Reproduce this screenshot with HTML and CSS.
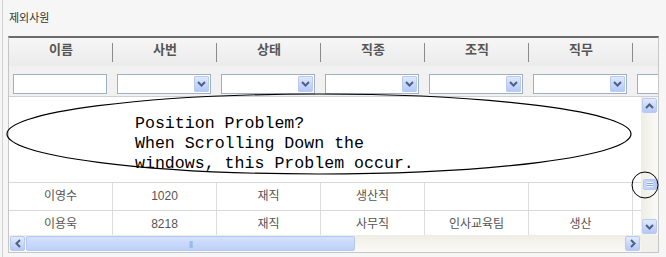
FILE: index.html
```html
<!DOCTYPE html>
<html lang="ko">
<head>
    <meta charset="UTF-8">
    <meta name="viewport" content="width=device-width, initial-scale=1.0">
    <title>제외사원</title>
    <link rel="stylesheet" href="styles.css">
</head>
<body>
    <div class="panel">
        <div class="title">제외사원</div>

        <div class="grid">
            <div class="grid-head">
                <div class="head-row">
                    <div class="head-cell">이름</div>
                    <div class="head-cell">사번</div>
                    <div class="head-cell">상태</div>
                    <div class="head-cell">직종</div>
                    <div class="head-cell">조직</div>
                    <div class="head-cell">직무</div>
                    <div class="head-cell"></div>
                </div>
                <div class="filter-row">
                    <div class="filter-cell"><input class="filter-input" type="text"></div>
                    <div class="filter-cell"><div class="filter-select"><span class="drop-btn"><svg width="9" height="6" viewBox="0 0 9 6"><polyline points="1,1 4.5,4.5 8,1" fill="none" stroke="#4d6185" stroke-width="2"/></svg></span></div></div>
                    <div class="filter-cell"><div class="filter-select"><span class="drop-btn"><svg width="9" height="6" viewBox="0 0 9 6"><polyline points="1,1 4.5,4.5 8,1" fill="none" stroke="#4d6185" stroke-width="2"/></svg></span></div></div>
                    <div class="filter-cell"><div class="filter-select"><span class="drop-btn"><svg width="9" height="6" viewBox="0 0 9 6"><polyline points="1,1 4.5,4.5 8,1" fill="none" stroke="#4d6185" stroke-width="2"/></svg></span></div></div>
                    <div class="filter-cell"><div class="filter-select"><span class="drop-btn"><svg width="9" height="6" viewBox="0 0 9 6"><polyline points="1,1 4.5,4.5 8,1" fill="none" stroke="#4d6185" stroke-width="2"/></svg></span></div></div>
                    <div class="filter-cell"><div class="filter-select"><span class="drop-btn"><svg width="9" height="6" viewBox="0 0 9 6"><polyline points="1,1 4.5,4.5 8,1" fill="none" stroke="#4d6185" stroke-width="2"/></svg></span></div></div>
                    <div class="filter-cell"><div class="filter-select"></div></div>
                </div>
            </div>

            <div class="grid-body">
                <div class="rows-view">
                    <div class="data-row">
                        <div class="cell">이영수</div>
                        <div class="cell">1020</div>
                        <div class="cell">재직</div>
                        <div class="cell">생산직</div>
                        <div class="cell"></div>
                        <div class="cell"></div>
                        <div class="cell"></div>
                    </div>
                    <div class="data-row">
                        <div class="cell">이용욱</div>
                        <div class="cell">8218</div>
                        <div class="cell">재직</div>
                        <div class="cell">사무직</div>
                        <div class="cell">인사교육팀</div>
                        <div class="cell">생산</div>
                        <div class="cell"></div>
                    </div>
                </div>
                <div class="vscroll">
                    <span class="sb-btn"><svg width="9" height="6" viewBox="0 0 9 6"><polyline points="1,5 4.5,1.5 8,5" fill="none" stroke="#4d6185" stroke-width="2"/></svg></span>
                    <span class="v-thumb"></span>
                    <span class="sb-btn sb-down"><svg width="9" height="6" viewBox="0 0 9 6"><polyline points="1,1 4.5,4.5 8,1" fill="none" stroke="#4d6185" stroke-width="2"/></svg></span>
                </div>
            </div>

            <div class="grid-foot">
                <div class="hscroll">
                    <span class="sb-btn"><svg width="6" height="9" viewBox="0 0 6 9"><polyline points="5,1 1.5,4.5 5,8" fill="none" stroke="#4d6185" stroke-width="2"/></svg></span>
                    <span class="h-thumb"><span class="grip">|||</span></span>
                    <span class="sb-btn sb-right"><svg width="6" height="9" viewBox="0 0 6 9"><polyline points="1,1 4.5,4.5 1,8" fill="none" stroke="#4d6185" stroke-width="2"/></svg></span>
                </div>
                <div class="corner"></div>
            </div>
        </div>
    </div>

    <!-- annotation drawn over the screenshot -->
    <svg class="note" width="666" height="257" viewBox="0 0 666 257">
        <ellipse cx="319" cy="134" rx="312" ry="40" fill="none" stroke="#000" stroke-width="1.2"/>
        <ellipse cx="645" cy="185" rx="13" ry="13" fill="none" stroke="#000" stroke-width="1"/>
        <text x="135" y="128">Position Problem?</text>
        <text x="135" y="148">When Scrolling Down the</text>
        <text x="135" y="168">windows, this Problem occur.</text>
    </svg>
</body>
</html>
```

FILE: styles.css
```css
body {
    margin: 0;
    background-color: #f6f6f6;
    font-family: "Liberation Sans", "Noto Sans CJK KR", sans-serif;
    width: 666px;
    height: 257px;
    overflow: hidden;
    position: relative;
}

.panel {
    margin-left: 2px;
    padding-left: 5px;
    height: 257px;
    border-left: 1px solid #d2d2d2;
}

.title {
    height: 36px;
    padding-top: 10px;
    padding-left: 1px;
    box-sizing: border-box;
    font-family: "Noto Sans CJK KR", sans-serif;
    font-size: 11px;
    line-height: 14px;
    color: #333;
}

.grid {
    width: 651px;
    box-sizing: border-box;
    border: 1px solid #c6c6c6;
    border-top: 2px solid #6c6c6c;
    background-color: #fff;
}

.grid-head {
    overflow: hidden;
}

.head-row,
.filter-row,
.data-row {
    display: grid;
    grid-template-columns: repeat(7, 104px);
}

.head-row {
    height: 28px;
    background: linear-gradient(#f6f6f6, #ebebeb);
}

.head-cell {
    text-align: center;
    font-family: "Noto Sans CJK KR", sans-serif;
    font-weight: bold;
    font-size: 13px;
    line-height: 16px;
    padding-top: 3px;
    color: #555;
    background: linear-gradient(#8a8a8a, #8a8a8a) no-repeat right 0 top 5px / 1px 19px;
}

.filter-row {
    height: 31px;
    background-color: #f1f1f1;
    border-bottom: 1px solid #d0d0d0;
    box-sizing: border-box;
}

.filter-cell {
    padding: 8px 0 0 4px;
}

.filter-input,
.filter-select {
    display: block;
    width: 94px;
    height: 20px;
    box-sizing: border-box;
    margin: 0;
    border: 1px solid #9db0c4;
    background-color: #fff;
}

.filter-select {
    display: flex;
    justify-content: flex-end;
    padding: 1px;
}

.drop-btn {
    width: 15px;
    height: 16px;
    box-sizing: border-box;
    display: flex;
    align-items: center;
    justify-content: center;
    background: linear-gradient(#dfe8fd, #b6c9f6);
    border: 1px solid #b8cbf5;
    border-radius: 1px;
}

.grid-body {
    display: flex;
    height: 138px;
}

.rows-view {
    flex: 1;
    overflow: hidden;
    padding-top: 85px;
    background-color: #fff;
}

.data-row {
    height: 27px;
    border-top: 1px solid #d9d9d9;
}

.cell {
    border-right: 1px solid #dcdcdc;
    text-align: center;
    font-size: 12px;
    line-height: 26px;
    color: #555;
    white-space: nowrap;
}

.vscroll {
    width: 17px;
    display: flex;
    flex-direction: column;
    align-items: center;
    background: linear-gradient(to right, #eeede5, #fbfaf6);
}

.sb-btn {
    width: 15px;
    height: 15px;
    box-sizing: border-box;
    margin: 1px;
    display: flex;
    align-items: center;
    justify-content: center;
    background: linear-gradient(#e2eafe, #b5c8f5);
    border: 1px solid #b7caf4;
    border-radius: 2px;
}

.v-thumb {
    width: 14px;
    height: 11px;
    margin-top: 65px;
    box-sizing: border-box;
    border: 1px solid #b4c8f4;
    border-radius: 2px;
    background:
        repeating-linear-gradient(#eef3fe 0 1px, #8da6d8 1px 2px) no-repeat center / 6px 5px,
        linear-gradient(to right, #c9d8fc, #b7cbf7);
}

.sb-down {
    margin-top: auto;
}

.grid-foot {
    display: flex;
    height: 17px;
}

.hscroll {
    width: 632px;
    display: flex;
    align-items: center;
    background: linear-gradient(#eeede5, #fbfaf6);
}

.h-thumb {
    width: 329px;
    height: 15px;
    box-sizing: border-box;
    border: 1px solid #b4c8f4;
    border-radius: 2px;
    background: linear-gradient(#d4e1fd, #bdd0f9);
    display: flex;
    align-items: center;
    justify-content: center;
    font-size: 8px;
    letter-spacing: -1px;
    color: #8aa3d6;
}

.sb-right {
    margin-left: auto;
}

.corner {
    flex: 1;
    background-color: #f1f0ea;
}

.note {
    position: absolute;
    left: 0;
    top: 0;
    pointer-events: none;
}

.note text {
    font-family: "Liberation Mono", monospace;
    font-size: 16.6px;
    fill: #000;
}
```
